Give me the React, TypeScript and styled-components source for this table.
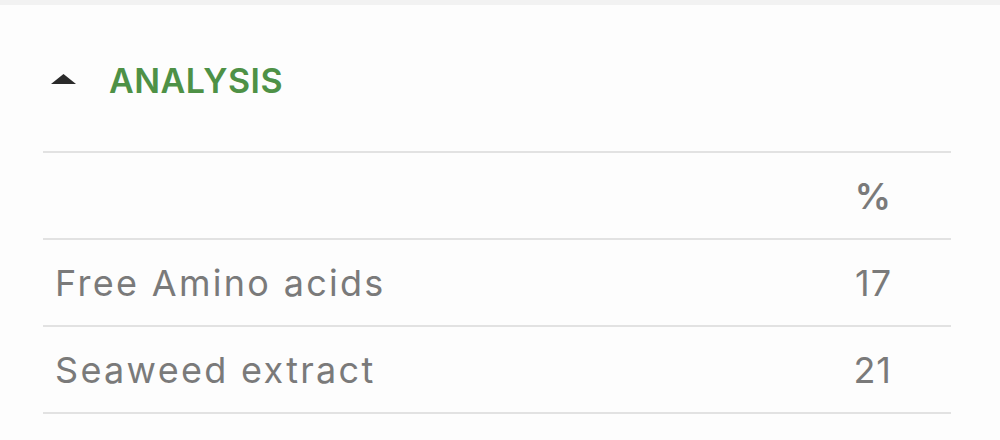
import { FC } from "react";
import styled, { createGlobalStyle } from "styled-components";

interface Row {
  name: string;
  value: string;
}

const rows: Row[] = [
  { name: "Free Amino acids", value: "17" },
  { name: "Seaweed extract", value: "21" },
];

const GlobalStyle = createGlobalStyle`
  html, body {
    margin: 0;
    padding: 0;
    background: #fdfdfd;
    font-family: Inter, "Noto Sans", sans-serif;
  }
`;

const App: FC = () => {
  return (
    <>
      <GlobalStyle />
      <TopStrip />
      <Panel>
        <Header>
          <Caret viewBox="0 0 25 10" aria-hidden>
            <path d="M12.5 0 L25 10 L0 10 Z" fill="#2a2a2a" />
          </Caret>
          <Title>ANALYSIS</Title>
        </Header>
        <Table>
          <HeadRow>
            <NameCell />
            <ValueCell $head>%</ValueCell>
          </HeadRow>
          {rows.map((r) => (
            <BodyRow key={r.name}>
              <NameCell>{r.name}</NameCell>
              <ValueCell>{r.value}</ValueCell>
            </BodyRow>
          ))}
        </Table>
      </Panel>
    </>
  );
};

export default App;

const TopStrip = styled.div`
  height: 5px;
  background: #f2f2f2;
`;

const Panel = styled.div`
  padding: 0 49px 0 43px;
`;

const Header = styled.div`
  display: flex;
  align-items: center;
  height: 146px;
  padding: 4px 0 0 8px;
  box-sizing: border-box;
  gap: 33px;
`;

const Caret = styled.svg`
  width: 25px;
  height: 10px;
  margin-top: -3px;
`;

const Title = styled.h2`
  margin: 0;
  font-size: 34px;
  font-weight: 600;
  color: #4e9146;
  letter-spacing: 0.5px;
`;

const Table = styled.div`
  border-top: 2px solid #e2e2e2;
`;

const HeadRow = styled.div`
  display: flex;
  align-items: center;
  height: 85px;
  border-bottom: 2px solid #e2e2e2;
`;

const BodyRow = styled(HeadRow)``;

const NameCell = styled.div`
  flex: 1;
  padding-left: 12px;
  font-size: 36px;
  letter-spacing: 2.3px;
  color: #7a7a7a;
`;

const ValueCell = styled.div<{ $head?: boolean }>`
  padding-right: 59px;
  font-size: 36px;
  letter-spacing: 1px;
  font-weight: ${({ $head }) => ($head ? 600 : 400)};
  color: #7a7a7a;
  text-align: right;
`;
